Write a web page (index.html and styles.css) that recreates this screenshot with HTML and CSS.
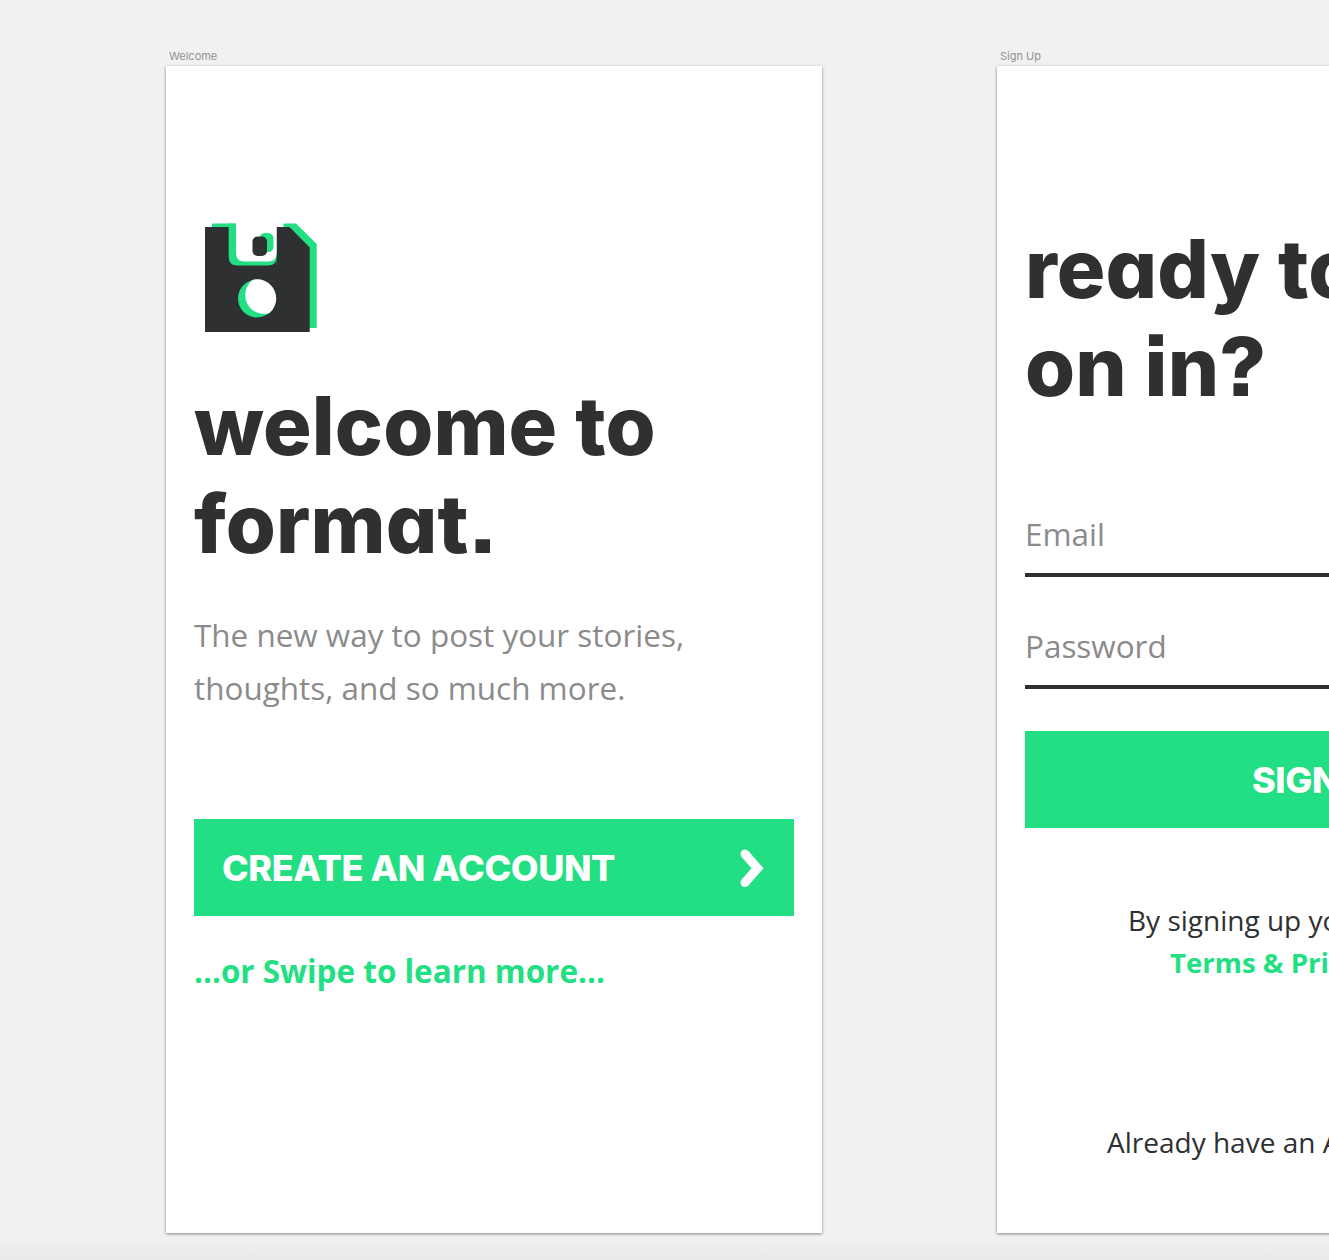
FILE: index.html
```html
<!DOCTYPE html>
<html lang="en">
<head>
    <meta charset="UTF-8">
    <meta name="viewport" content="width=device-width, initial-scale=1.0">
    <title>format.</title>
    <link rel="stylesheet" href="styles.css">
</head>
<body>

    <div class="canvas">
        <!-- Welcome -->
        <section class="artboard">
            <div class="artboard-name">Welcome</div>
            <div class="screen welcome">
                <svg class="logo" width="114" height="110" viewBox="0 0 114 110">
                    <clipPath id="hole"><circle cx="52" cy="75.500" r="19.200"/></clipPath>
                    <path class="logo-shadow" d="M7 .5H31V30H78.500V.5H91L111.700 21V105H7Z"/>
                    <path class="logo-body" d="M0 4H24V42H71.500V4H84.500L104.700 24.500V109H0Z"/>
                    <path class="logo-shadow" d="M23.700 .5H31V20H71.500V34.500Q71.500 42.500 63.500 42.500H32Q23.700 42.500 23.700 34Z"/>
                    <path class="logo-body" d="M23.700 34Q23.700 42.500 32 42.500H23.700ZM71.500 34Q71.500 42.500 63.500 42.500H71.500Z"/>
                    <path class="logo-white" d="M31 0H71.500V30Q71.500 38.500 63.500 38.500H39.500Q31 38.500 31 30Z"/>
                    <rect class="logo-shadow" x="54.500" y="10" width="14" height="19" rx="5.500"/>
                    <rect class="logo-body" x="47.500" y="13.500" width="14.500" height="19.500" rx="5"/>
                    <circle class="logo-shadow" cx="52" cy="75.500" r="19"/>
                    <circle class="logo-white" cx="59.200" cy="72" r="19" clip-path="url(#hole)"/>
                </svg>
                <h1>welcome to<br>format.</h1>
                <p class="intro">The new way to post your stories,<br>thoughts, and so much more.</p>
                <a class="button create" href="#">
                    <span>CREATE AN ACCOUNT</span>
                    <svg class="chevron" width="26" height="40" viewBox="0 0 26 40">
                        <path d="M6 6L18.500 20.300L6 34.500"/>
                    </svg>
                </a>
                <a class="swipe" href="#">...or Swipe to learn more...</a>
            </div>
        </section>

        <!-- Sign Up -->
        <section class="artboard">
            <div class="artboard-name">Sign Up</div>
            <div class="screen signup">
                <h1>ready to<br>on in?</h1>
                <div class="field">Email</div>
                <div class="field">Password</div>
                <a class="button submit" href="#">SIGN UP</a>
                <p class="terms">By signing up you</p>
                <a class="terms-link" href="#">Terms &amp; Privacy</a>
                <p class="login">Already have an Account?</p>
            </div>
        </section>
    </div>

</body>
</html>
```
FILE: styles.css
```css
body {
    margin: 0;
    overflow: hidden;
    background-color: #f1f1f1;
    font-family: "Open Sans", sans-serif;
    color: #2e3032;
}

.canvas {
    display: flex;
    gap: 175px;
    box-sizing: border-box;
    height: 1260px;
    padding: 48px 0 0 166px;
    overflow: hidden;
    background: linear-gradient(#f1f1f1 1240px, #e9e9e9);
}

.artboard {
    flex: 0 0 656px;
}

.artboard-name {
    height: 18px;
    padding-left: 3px;
    font-family: Inter, sans-serif;
    font-size: 11px;
    line-height: 17px;
    color: #929292;
}

.screen {
    display: flex;
    flex-direction: column;
    box-sizing: border-box;
    height: 1167px;
    padding: 0 28px;
    background-color: #fff;
    box-shadow: 0 1px 3px rgba(0, 0, 0, 0.45);
}

h1 {
    margin: 0;
    font-family: Inter, sans-serif;
    font-size: 81px;
    font-weight: 850;
    line-height: 98px;
    letter-spacing: 0.1px;
    font-feature-settings: "cv11", "ss07";
    white-space: nowrap;
}

a {
    text-decoration: none;
}

/* Logo */
.logo {
    margin: 157px 0 0 11px;
    flex: none;
}

.logo-shadow {
    fill: #21df82;
}

.logo-body {
    fill: #2e3032;
}

.logo-white {
    fill: #fff;
}

/* Welcome screen */
.welcome h1 {
    margin-top: 44px;
}

.intro {
    margin: 35px 0 0;
    font-size: 31.45px;
    line-height: 53px;
    color: #8b8b8b;
    white-space: nowrap;
}

.button {
    display: flex;
    align-items: center;
    box-sizing: border-box;
    height: 97px;
    background-color: #21df82;
    font-family: Inter, sans-serif;
    font-size: 36px;
    font-weight: 800;
    letter-spacing: -0.4px;
    color: #fff;
}

.create {
    justify-content: space-between;
    margin-top: 105px;
    padding: 0 29px 0 28px;
}

.chevron path {
    fill: none;
    stroke: #fff;
    stroke-width: 9;
    stroke-linecap: round;
}

.swipe {
    margin-top: 33px;
    font-size: 31.45px;
    font-weight: 700;
    line-height: 44px;
    color: #21df82;
}

/* Sign up screen */
.signup h1 {
    margin-top: 154px;
}

.field {
    box-sizing: border-box;
    height: 112px;
    padding-top: 47px;
    border-bottom: 4px solid #2e3032;
    font-size: 31.45px;
    line-height: 44px;
    color: #8b8b8b;
}

.signup h1 + .field {
    margin-top: 49px;
}

.submit {
    margin-top: 42px;
    padding-left: 227px;
}

.terms,
.terms-link,
.login {
    margin: 0;
    font-size: 28px;
    line-height: 42px;
    white-space: nowrap;
}

.terms {
    margin-top: 71px;
    padding-left: 103px;
}

.terms-link {
    padding-left: 145px;
    font-size: 27.6px;
    font-weight: 700;
    color: #21df82;
}

.login {
    margin-top: 138px;
    padding-left: 82px;
}
```
